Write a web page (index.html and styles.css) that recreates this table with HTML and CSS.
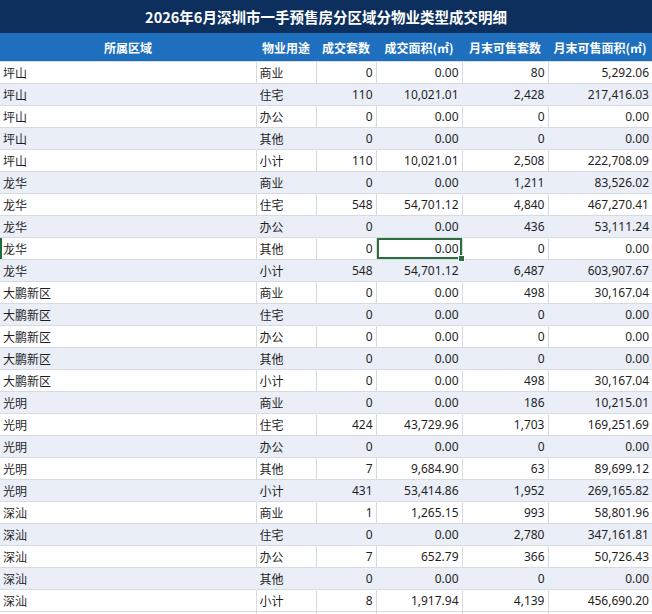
FILE: index.html
```html
<!DOCTYPE html>
<html lang="zh-CN">
<head>
<meta charset="utf-8">
<title>2026年6月深圳市一手预售房分区域分物业类型成交明细</title>
<link rel="stylesheet" href="styles.css">
</head>
<body>
<div class="sheet">
  <div class="title">2026年6月深圳市一手预售房分区域分物业类型成交明细</div>
  <table class="grid">
    <colgroup>
      <col class="c1"><col class="c2"><col class="c3"><col class="c4"><col class="c5"><col class="c6">
    </colgroup>
    <thead>
      <tr><th>所属区域</th><th>物业用途</th><th>成交套数</th><th>成交面积(㎡)</th><th>月末可售套数</th><th>月末可售面积(㎡)</th></tr>
    </thead>
    <tbody>
      <tr><td class="t">坪山</td><td class="t">商业</td><td>0</td><td>0.00</td><td>80</td><td>5,292.06</td></tr>
      <tr class="alt"><td class="t">坪山</td><td class="t">住宅</td><td>110</td><td>10,021.01</td><td>2,428</td><td>217,416.03</td></tr>
      <tr><td class="t">坪山</td><td class="t">办公</td><td>0</td><td>0.00</td><td>0</td><td>0.00</td></tr>
      <tr class="alt"><td class="t">坪山</td><td class="t">其他</td><td>0</td><td>0.00</td><td>0</td><td>0.00</td></tr>
      <tr><td class="t">坪山</td><td class="t">小计</td><td>110</td><td>10,021.01</td><td>2,508</td><td>222,708.09</td></tr>
      <tr class="alt"><td class="t">龙华</td><td class="t">商业</td><td>0</td><td>0.00</td><td>1,211</td><td>83,526.02</td></tr>
      <tr><td class="t">龙华</td><td class="t">住宅</td><td>548</td><td>54,701.12</td><td>4,840</td><td>467,270.41</td></tr>
      <tr class="alt"><td class="t">龙华</td><td class="t">办公</td><td>0</td><td>0.00</td><td>436</td><td>53,111.24</td></tr>
      <tr class="active"><td class="t rowmark">龙华</td><td class="t">其他</td><td>0</td><td class="sel">0.00<span class="handle"></span></td><td>0</td><td>0.00</td></tr>
      <tr class="alt"><td class="t">龙华</td><td class="t">小计</td><td>548</td><td>54,701.12</td><td>6,487</td><td>603,907.67</td></tr>
      <tr><td class="t">大鹏新区</td><td class="t">商业</td><td>0</td><td>0.00</td><td>498</td><td>30,167.04</td></tr>
      <tr class="alt"><td class="t">大鹏新区</td><td class="t">住宅</td><td>0</td><td>0.00</td><td>0</td><td>0.00</td></tr>
      <tr><td class="t">大鹏新区</td><td class="t">办公</td><td>0</td><td>0.00</td><td>0</td><td>0.00</td></tr>
      <tr class="alt"><td class="t">大鹏新区</td><td class="t">其他</td><td>0</td><td>0.00</td><td>0</td><td>0.00</td></tr>
      <tr><td class="t">大鹏新区</td><td class="t">小计</td><td>0</td><td>0.00</td><td>498</td><td>30,167.04</td></tr>
      <tr class="alt"><td class="t">光明</td><td class="t">商业</td><td>0</td><td>0.00</td><td>186</td><td>10,215.01</td></tr>
      <tr><td class="t">光明</td><td class="t">住宅</td><td>424</td><td>43,729.96</td><td>1,703</td><td>169,251.69</td></tr>
      <tr class="alt"><td class="t">光明</td><td class="t">办公</td><td>0</td><td>0.00</td><td>0</td><td>0.00</td></tr>
      <tr><td class="t">光明</td><td class="t">其他</td><td>7</td><td>9,684.90</td><td>63</td><td>89,699.12</td></tr>
      <tr class="alt"><td class="t">光明</td><td class="t">小计</td><td>431</td><td>53,414.86</td><td>1,952</td><td>269,165.82</td></tr>
      <tr><td class="t">深汕</td><td class="t">商业</td><td>1</td><td>1,265.15</td><td>993</td><td>58,801.96</td></tr>
      <tr class="alt"><td class="t">深汕</td><td class="t">住宅</td><td>0</td><td>0.00</td><td>2,780</td><td>347,161.81</td></tr>
      <tr><td class="t">深汕</td><td class="t">办公</td><td>7</td><td>652.79</td><td>366</td><td>50,726.43</td></tr>
      <tr class="alt"><td class="t">深汕</td><td class="t">其他</td><td>0</td><td>0.00</td><td>0</td><td>0.00</td></tr>
      <tr><td class="t">深汕</td><td class="t">小计</td><td>8</td><td>1,917.94</td><td>4,139</td><td>456,690.20</td></tr>
      <tr><td class="t"></td><td class="t"></td><td></td><td></td><td></td><td></td></tr>
    </tbody>
  </table>
</div>
</body>
</html>
```
FILE: styles.css
```css
html, body {
  margin: 0;
  padding: 0;
  height: 614px;
  overflow: hidden;
  background: #ffffff;
}
.sheet {
  width: 652px;
  font-family: "Noto Sans", "Noto Sans CJK SC", sans-serif;
  color: #1f1f1f;
}
.title {
  height: 33px;
  background: #0c2f5e;
  color: #ffffff;
  font-family: "Noto Sans CJK SC", sans-serif;
  font-weight: 700;
  font-size: 14.5px;
  display: flex;
  align-items: center;
  justify-content: center;
}
.grid {
  width: 652px;
  border-collapse: collapse;
  table-layout: fixed;
  font-size: 12px;
}
.c1 { width: 256px; }
.c2 { width: 60px; }
.c3 { width: 60px; }
.c4 { width: 86px; }
.c5 { width: 86px; }
.c6 { width: 104px; }
.grid th {
  height: 28px;
  padding: 0;
  background: #1f6fbf;
  color: #ffffff;
  font-family: "Noto Sans CJK SC", sans-serif;
  font-weight: 700;
  font-size: 12px;
  text-align: center;
  border: none;
}
.grid td {
  height: 21px;
  padding: 0 3px 0 3px;
  text-align: right;
  border-top: 1px solid #d6dbe2;
  border-left: 1px solid #d6dbe2;
  white-space: nowrap;
  line-height: 21px;
  position: relative;
}
.grid td:first-child { border-left: none; }
.grid td.t {
  text-align: left;
  font-family: "Noto Sans CJK SC", sans-serif;
}
.grid tr.alt td {
  background: #e9eef7;
  border-left-color: #e9eef7;
}
.grid td.rowmark {
  box-shadow: inset 2px 0 0 #1e6b3c;
}
.grid td.sel {
  box-shadow: inset 0 0 0 2px #2a6e41;
}
.handle {
  position: absolute;
  right: -3px;
  bottom: -3px;
  width: 5px;
  height: 5px;
  background: #2a6e41;
  border: 1px solid #ffffff;
  z-index: 2;
}
```
